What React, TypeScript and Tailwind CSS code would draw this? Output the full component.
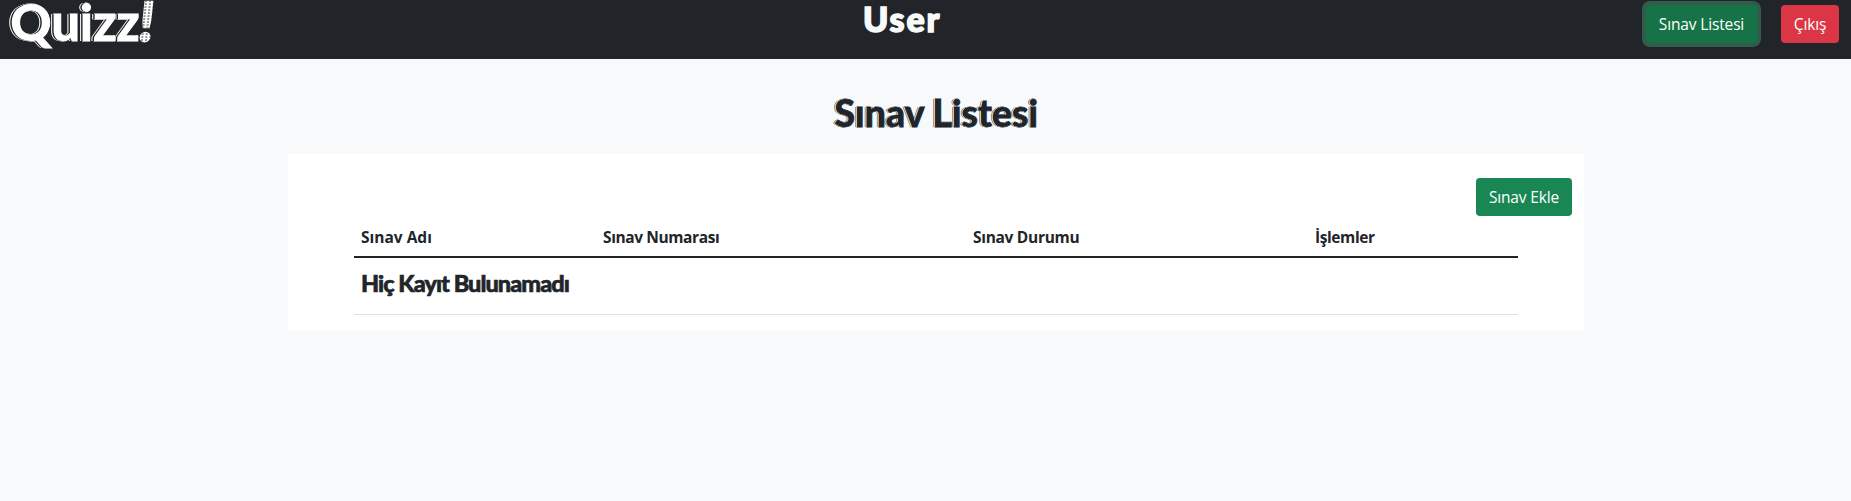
import type { ReactNode } from 'react';

const display = "block whitespace-nowrap font-['Lato',sans-serif] font-black leading-none [paint-order:stroke] [stroke-linejoin:round]";

function Button({ className, children }: { className: string; children: ReactNode }) {
  return (
    <button
      type="button"
      className={`flex h-[38px] items-center justify-center whitespace-nowrap rounded text-[15.5px] leading-6 tracking-[-0.15px] text-white ${className}`}
    >
      {children}
    </button>
  );
}

const heading = 'pb-[7px] pl-[7px] pt-px text-left text-[15.5px] font-bold leading-6';

export default function App() {
  return (
    <div className="min-h-screen bg-[#f8f9fb] font-['Open_Sans','Noto_Sans',sans-serif] text-[#212529]">
      <nav className="grid h-[59px] grid-cols-[863px_1fr_auto] items-start bg-[#212529] pr-3">
        <div className="flex pl-[10px] text-white">
          <span className={`${display} -mt-[4px] text-[51px] tracking-[-0.2px] [-webkit-text-stroke:1px_#fff] [text-shadow:-1.5px_0_0_#212529,-2.5px_-0.5px_0_#fff]`}>Quizz</span>
          <span className={`${display} -mt-[6px] skew-x-[-6deg] bg-[radial-gradient(circle_at_1px_1px,#212529_0.6px,transparent_0.9px),linear-gradient(#fff,#fff)] bg-[size:4px_3px,auto] bg-clip-text text-[54px] text-transparent [-webkit-text-stroke:2px_transparent]`}>!</span>
        </div>
        <span className={`${display} pt-[2px] text-[34px] tracking-[1.9px] text-[#f8f9fa] [-webkit-text-stroke:1.5px_#f8f9fa]`}>User</span>
        <div className="flex gap-6 pt-[5px]">
          <Button className="w-[111px] bg-[#157347] ring-4 ring-[#305c49]">Sınav Listesi</Button>
          <Button className="w-[58px] bg-[#dc3545]">Çıkış</Button>
        </div>
      </nav>
      <main>
        <h1 className={`${display} pl-[834px] pt-[34px] text-[38px] tracking-[-0.3px] [-webkit-text-stroke:1px_#212529] [text-shadow:-1px_0_0_#f8f9fb,-1.5px_-0.5px_0_#212529]`}>Sınav Listesi</h1>
        <section className="ml-[288px] mt-[23px] h-[177px] w-[1296px] bg-white pt-6">
          <div className="flex justify-end pr-3">
            <Button className="w-[96px] bg-[#198754]">Sınav Ekle</Button>
          </div>
          <table className="ml-[66px] mt-[8px] w-[1164px] table-fixed border-collapse">
            <colgroup>
              <col className="w-[242px]" />
              <col className="w-[370px]" />
              <col className="w-[342px]" />
              <col className="w-[210px]" />
            </colgroup>
            <thead>
              <tr className="border-b-2 border-[#212529]">
                <th className={heading}>Sınav Adı</th>
                <th className={`${heading} tracking-[-0.4px]`}>Sınav Numarası</th>
                <th className={`${heading} tracking-[-0.3px]`}>Sınav Durumu</th>
                <th className={`${heading} tracking-[-0.4px]`}>İşlemler</th>
              </tr>
            </thead>
            <tbody>
              <tr className="h-[57px] border-b border-[#dee2e6]">
                <td colSpan={4} className="pl-[7px] pt-[14px] align-top">
                  <span className={`${display} text-[23.5px] tracking-[-0.95px] [-webkit-text-stroke:0.6px_#212529]`}>Hiç Kayıt Bulunamadı</span>
                </td>
              </tr>
            </tbody>
          </table>
        </section>
      </main>
    </div>
  );
}
